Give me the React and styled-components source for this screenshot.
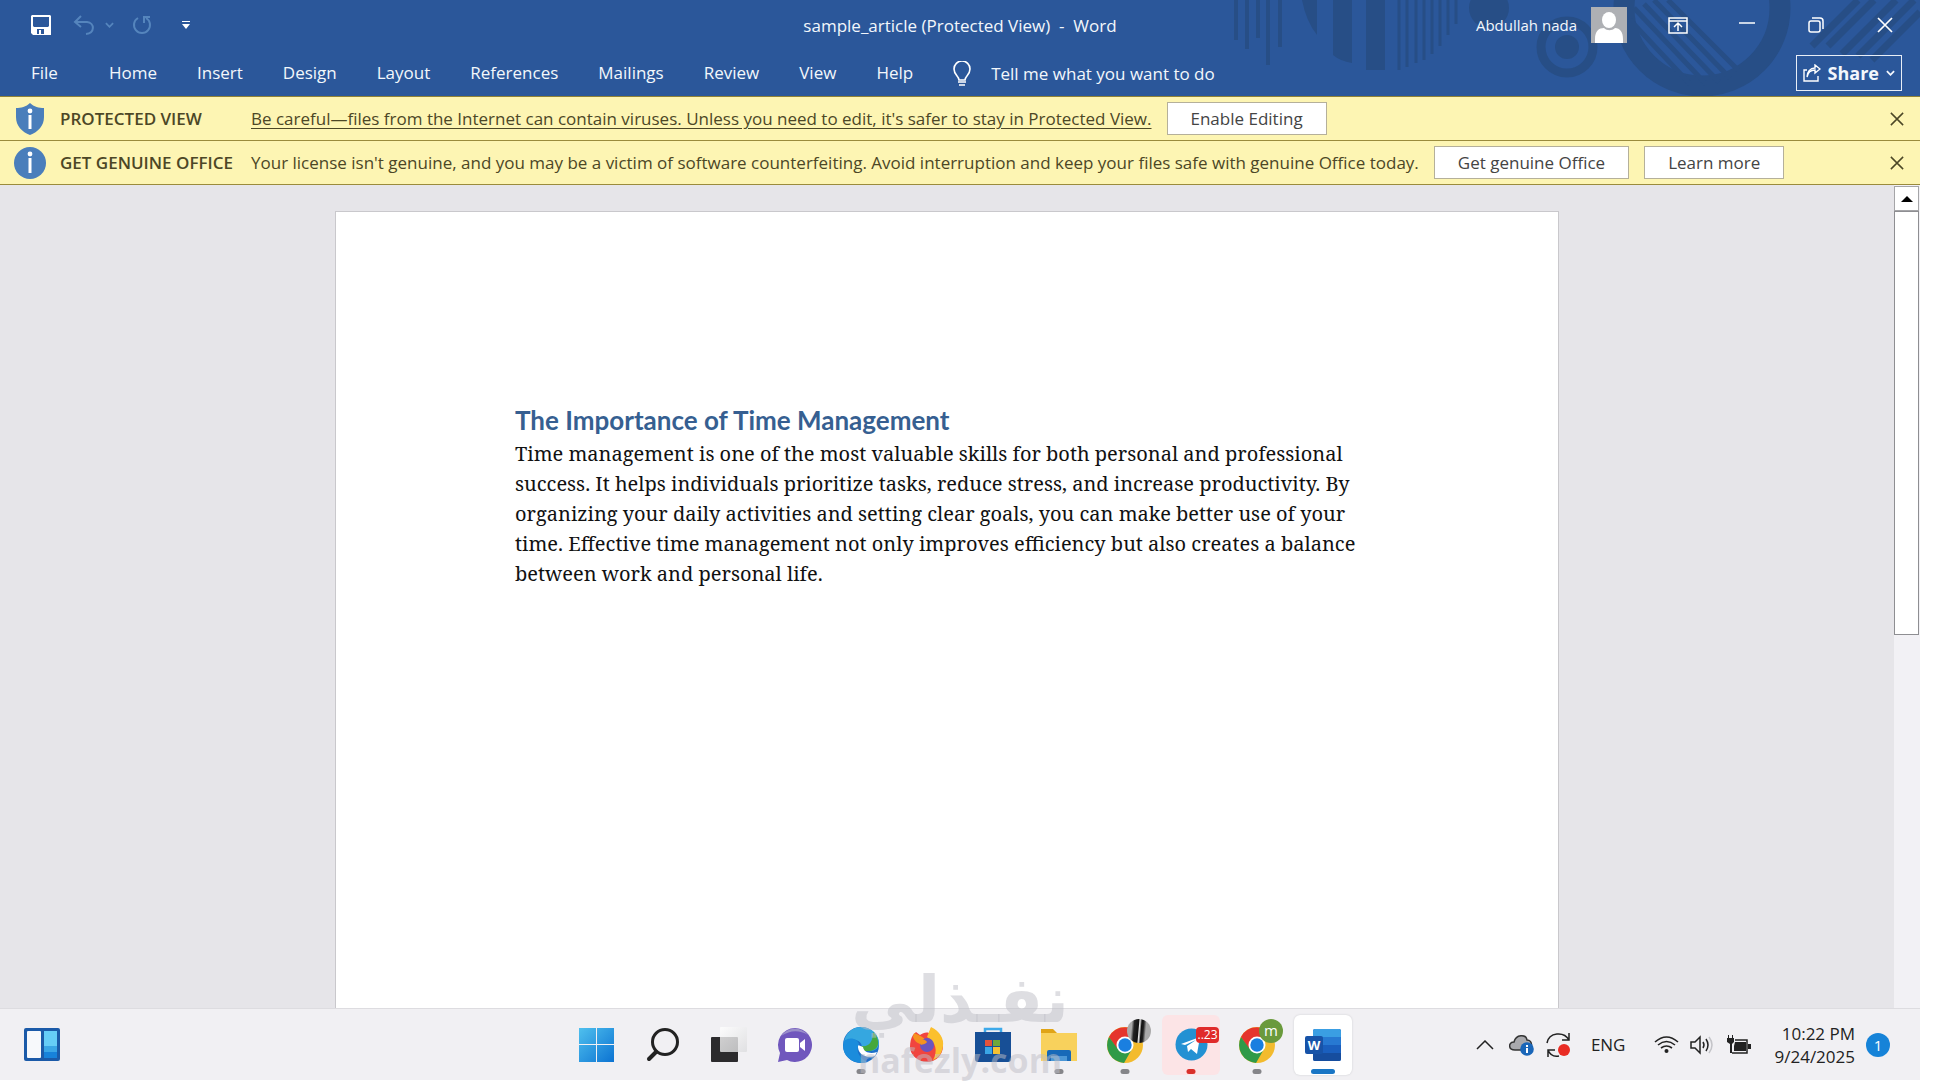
import React from 'react';
import styled, { createGlobalStyle } from 'styled-components';

const ui = '"Open Sans", "Noto Sans", sans-serif';

const GlobalStyle = createGlobalStyle`
  * {
    box-sizing: border-box;
  }
  body {
    margin: 0;
    background: #fff;
    font-family: ${ui};
    font-size: 17px;
  }
  button, input {
    font: inherit;
    color: inherit;
    background: none;
    border: 0;
    padding: 0;
    margin: 0;
  }
  svg {
    display: block;
  }
`;

const Desktop = styled.div`
  display: flex;
  flex-direction: column;
  height: 100vh;
  padding: 0 16px 12px 0;
`;

/* ---------- header ---------- */

const Header = styled.header`
  position: relative;
  overflow: hidden;
  flex: none;
  background: #2b579a;
  color: #f3f7fc;
`;

const HeaderArt = styled.svg`
  position: absolute;
  top: 0;
  right: 0;
`;

const TitleBar = styled.div`
  position: relative;
  display: grid;
  grid-template-columns: 1fr auto 1fr;
  align-items: center;
  height: 50px;
`;

const QuickAccess = styled.div`
  display: flex;
  align-items: center;
  padding-left: 31px;
`;

const ToolButton = styled.button`
  margin-right: ${(p) => p.$gap || 0}px;
  color: ${(p) => (p.$dim ? '#5585bd' : '#fff')};
`;

const DocTitle = styled.div`
  white-space: pre;
`;

const Account = styled.div`
  display: flex;
  align-items: center;
  justify-content: flex-end;
  padding-right: 25px;
`;

const UserName = styled.span`
  font-size: 15px;
  margin-right: 14px;
`;

const WindowButton = styled.button`
  display: flex;
  justify-content: center;
  width: 20px;
  margin-left: ${(p) => p.$gap || 49}px;
`;

const Ribbon = styled.nav`
  position: relative;
  display: flex;
  align-items: center;
  height: 46px;
  padding: 0 18px 0 11px;
`;

const Tab = styled.button`
  padding: 0 20px;
  margin-right: ${(p) => (p.$first ? 11 : 0)}px;
  line-height: 24px;
`;

const TellMe = styled.label`
  display: flex;
  align-items: center;
  flex: 1;
  gap: 20px;
  padding-left: 20px;
`;

const TellInput = styled.input`
  width: 260px;
  outline: 0;
  &::placeholder {
    color: #f3f7fc;
    opacity: 1;
  }
`;

const ShareButton = styled.button`
  display: flex;
  align-items: center;
  gap: 7px;
  height: 36px;
  padding: 0 6px;
  border: 1px solid #e8eef7;
  font-size: 18px;
  font-weight: 700;
`;

/* ---------- message bars ---------- */

const MessageBar = styled.section`
  display: flex;
  align-items: center;
  flex: none;
  height: 44px;
  padding: 0 16px 0 14px;
  border-bottom: 1px solid #9a8b3c;
  background: #fdf5b3;
  color: #4c4726;
  &:first-of-type {
    height: 45px;
    border-top: 1px solid #8f8237;
  }
`;

const BarTitle = styled.strong`
  width: 191px;
  margin-left: 14px;
  font-weight: 600;
  white-space: nowrap;
`;

const BarLink = styled.a`
  color: inherit;
  text-underline-offset: 3px;
`;

const BarText = styled.span`
  white-space: nowrap;
`;

const BarButton = styled.button`
  height: 33px;
  margin-left: 15px;
  padding: 0 23px;
  border: 1px solid #b5b09a;
  background: #fff;
  color: #444;
  white-space: nowrap;
`;

const BarClose = styled.button`
  margin-left: auto;
`;

/* ---------- document ---------- */

const Workspace = styled.main`
  display: flex;
  flex: 1;
  min-height: 0;
  background: #e6e5e9;
`;

const Canvas = styled.div`
  flex: 1;
  overflow: hidden;
  padding-top: 26px;
`;

const Page = styled.article`
  width: 1224px;
  max-width: 100%;
  height: 1584px;
  margin: 0 auto;
  padding: 192px 178px 0 179px;
  border: 1px solid #c9c8cc;
  background: #fff;
`;

const Heading = styled.h1`
  margin: 0;
  color: #365f91;
  font: 700 26px/32px Lato, "Open Sans", sans-serif;
`;

const Paragraph = styled.p`
  margin: 3px 0 0;
  color: #111;
  font: 20px/30px "Noto Serif", "Liberation Serif", serif;
`;

const ScrollBar = styled.div`
  display: flex;
  flex-direction: column;
  width: 26px;
  padding: 1px 1px 0 0;
  background: #f2f1f5;
`;

const ScrollUp = styled.button`
  display: flex;
  align-items: center;
  justify-content: center;
  height: 25px;
  border: 1px solid #a5a5a8;
  background: #fff;
`;

const ScrollThumb = styled.div`
  flex: 17;
  border: 1px solid #8e8e92;
  background: #fff;
`;

const ScrollTrack = styled.div`
  flex: 15;
`;

/* ---------- taskbar ---------- */

const TaskBar = styled.footer`
  position: relative;
  display: grid;
  grid-template-columns: 1fr auto 1fr;
  align-items: center;
  flex: none;
  height: 72px;
  padding: 0 24px;
  border-top: 1px solid #dddce0;
  background: #f1f0f3;
  color: #222;
`;

const Corner = styled.div`
  display: flex;
`;

const Apps = styled.div`
  display: flex;
`;

const AppButton = styled.button`
  position: relative;
  display: flex;
  align-items: center;
  justify-content: center;
  width: 58px;
  height: 60px;
  margin: 0 4px;
  border-radius: 6px;
  background: ${(p) => p.$tint || 'transparent'};
  box-shadow: ${(p) => (p.$active ? '0 0 2px #c8c8cc' : 'none')};
  &::after {
    content: '';
    position: absolute;
    bottom: 1px;
    left: 50%;
    width: ${(p) => (p.$active ? 24 : 9)}px;
    height: 5px;
    border-radius: 3px;
    transform: translateX(-50%);
    background: ${(p) => p.$mark || 'transparent'};
  }
`;

const Badge = styled.span`
  position: absolute;
  top: ${(p) => (p.$square ? 12 : 4)}px;
  right: ${(p) => (p.$square ? 1 : 3)}px;
  display: flex;
  align-items: center;
  justify-content: center;
  width: ${(p) => (p.$square ? 23 : 24)}px;
  height: ${(p) => (p.$square ? 16 : 24)}px;
  border-radius: ${(p) => (p.$square ? '4px' : '50%')};
  background: ${(p) => p.$fill};
  color: #fff;
  font-size: ${(p) => (p.$square ? 12 : 15)}px;
  line-height: 1;
`;

const Tray = styled.div`
  display: flex;
  align-items: center;
  justify-content: flex-end;
  padding-right: 6px;
`;

const TrayButton = styled.button`
  margin-right: ${(p) => p.$gap}px;
`;

const Clock = styled.time`
  margin-right: 11px;
  text-align: right;
  line-height: 23px;
`;

const Notice = styled.span`
  display: grid;
  place-items: center;
  width: 24px;
  height: 24px;
  border-radius: 50%;
  background: #1683d8;
  color: #fff;
  font-size: 15px;
`;

const Watermark = styled.div`
  position: absolute;
  bottom: 0;
  left: 50%;
  transform: translateX(-50%);
  pointer-events: none;
  text-align: center;
  color: rgba(190, 189, 197, 0.5);
  font-weight: 700;
`;

const WatermarkName = styled.div`
  font: 700 64px/80px "DejaVu Sans", sans-serif;
`;

const WatermarkSite = styled.div`
  font-size: 34px;
  line-height: 40px;
`;

/* ---------- drawings ---------- */

const Art = () => (
  <HeaderArt width="700" height="96" viewBox="1220 0 700 96" fill="none" stroke="#274e86" aria-hidden="true">
    <path strokeWidth="4" d="M1236 0v40M1247 0v49M1258 0v38M1268 0v65M1280 0v47" />
    <path fill="#274e86" stroke="none" d="M1302 0h15v35q-11-14-15-35zM1333 0h19v63q-12-2-19-8zM1366 0h19v70h-19z" />
    <path strokeWidth="3" d="M1399 0v70M1407 0v67M1416 0v63M1424 0v60M1432 0v54M1440 0v46M1448 0v35M1456 0v24" />
    <circle cx="1489" cy="8" r="20" fill="#274e86" stroke="none" />
    <circle cx="1567" cy="47" r="26" strokeWidth="9" />
    <circle cx="1567" cy="47" r="12" fill="#274e86" stroke="none" />
    <circle cx="1702" cy="8" r="78" strokeWidth="21" />
    <path strokeWidth="5" d="M1634 8l72 76M1644 4l75 78M1654 0l76 78M1668 0l70 70M1630 20l60 64" />
    <path strokeWidth="7" d="M1812 46l46-46M1828 46l46-46M1842 54l54-54M1858 56l56-56M1872 60l48-48" />
  </HeaderArt>
);

const SaveIcon = () => (
  <svg width="20" height="20" viewBox="0 0 20 20">
    <path fill="#fff" fillRule="evenodd" d="M1 0h18l1 1v19H2l-2-2V1zM2 2v9l1 1h14l1-1V2zM6 14v5h2v-4h2v4h3v-5z" />
  </svg>
);

const UndoIcon = () => (
  <svg width="22" height="20" viewBox="0 0 22 20" fill="none" stroke="currentColor" strokeWidth="2">
    <path d="M8 1L2 7l6 5M2 7h12c8 1 8 11-1 12" />
  </svg>
);

const RedoIcon = () => (
  <svg width="20" height="20" viewBox="0 0 20 20" fill="none" stroke="currentColor" strokeWidth="2">
    <path d="M6 3a8 8 0 1 0 8 0M18 2h-6v6" />
  </svg>
);

const Chevron = ({ size = 9, width = 2 }) => (
  <svg width={size} height="6" viewBox="0 0 10 6" fill="none" stroke="currentColor" strokeWidth={width}>
    <path d="M1 1l4 4 4-4" />
  </svg>
);

const CustomizeIcon = () => (
  <svg width="8" height="8" viewBox="0 0 8 8">
    <path fill="#fff" d="M0 0h8v1H0zM0 3h8L4 8z" />
  </svg>
);

const Avatar = () => (
  <svg width="36" height="36" viewBox="0 0 36 36">
    <path fill="#aeb0b4" d="M0 0h36v36H0z" />
    <path fill="#fff" d="M4 36v-4c0-8 4-11 9-11 3 3 8 3 11 0 5 0 8 4 8 11v4z" />
    <ellipse cx="18" cy="13" rx="7" ry="8" fill="#fff" />
  </svg>
);

const RibbonIcon = () => (
  <svg width="20" height="17" viewBox="0 0 20 17" fill="none" stroke="#fff" strokeWidth="1.5">
    <path d="M1 1h18v15H1zM1 4h18M10 14V7M6 10l4-4 4 4" />
  </svg>
);

const MinimizeIcon = () => (
  <svg width="16" height="16" viewBox="0 0 16 16" stroke="#fff" strokeWidth="1.5">
    <path d="M0 6h16" />
  </svg>
);

const RestoreIcon = () => (
  <svg width="16" height="16" viewBox="0 0 16 16" fill="none" stroke="#fff" strokeWidth="1.5">
    <rect x="1" y="4" width="11" height="11" rx="2" />
    <path d="M4 1h8q3 0 3 3v8" />
  </svg>
);

const CloseIcon = ({ size = 16, color = '#fff' }) => (
  <svg width={size} height={size} viewBox="0 0 16 16" stroke={color} strokeWidth="1.7">
    <path d="M1 1l14 14M15 1L1 15" />
  </svg>
);

const BulbIcon = () => (
  <svg width="18" height="25" viewBox="0 0 18 25" fill="none" stroke="#fff" strokeWidth="1.6">
    <path d="M6 19c0-4-5-5-5-11a8 8 0 0 1 16 0c0 6-5 7-5 11zM5 21h8M6 24h6" />
  </svg>
);

const ShareIcon = () => (
  <svg width="18" height="18" viewBox="0 0 18 18" fill="none" stroke="#fff" strokeWidth="1.4">
    <path d="M4 6H1v11h14v-5M4 13c1-5 4-7 8-7v3l5-4-5-4v3C7 4 4 8 4 13z" />
  </svg>
);

const ShieldIcon = () => (
  <svg width="32" height="32" viewBox="0 0 32 32">
    <path fill="#4a7ebb" d="M16 0c4 4 9 5 14 5v9c0 9-6 15-14 18C8 29 2 23 2 14V5c5 0 10-1 14-5z" />
    <circle cx="16" cy="8" r="2.4" fill="#fff" />
    <path fill="#fff" d="M14.500 12h3v14h-3z" />
  </svg>
);

const InfoIcon = () => (
  <svg width="32" height="32" viewBox="0 0 32 32">
    <circle cx="16" cy="16" r="16" fill="#4a7ebb" />
    <circle cx="16" cy="7" r="2.400" fill="#fff" />
    <path fill="#fff" d="M14.500 11h3v15h-3z" />
  </svg>
);

const WidgetsIcon = () => (
  <svg width="36" height="33" viewBox="0 0 36 33">
    <rect width="36" height="33" rx="2" fill="#1b5aa8" />
    <rect x="3" y="3" width="14" height="27" rx="1" fill="#f7f9fb" />
    <path fill="#66cdf7" d="M20 3h13v15H20z" />
    <path fill="#3aa6e6" d="M20 18h13v6H20z" />
    <path fill="#1782da" d="M20 24h13v6H20z" />
  </svg>
);

const StartIcon = () => (
  <svg width="36" height="36" viewBox="0 0 36 36">
    <defs>
      <linearGradient id="start" x2="1" y2="1">
        <stop stopColor="#4fc0ee" />
        <stop offset="1" stopColor="#0c73d2" />
      </linearGradient>
    </defs>
    <path fill="url(#start)" d="M0 1h17v16H0zM18 1h17v16H18zM0 18h17v17H0zM18 18h17v17H18z" />
  </svg>
);

const SearchIcon = () => (
  <svg width="34" height="34" viewBox="0 0 34 34" fill="none" stroke="#222" strokeLinecap="round">
    <circle cx="19" cy="14" r="12.500" strokeWidth="3" />
    <path strokeWidth="4" d="M10 24l-7 7" />
  </svg>
);

const TaskViewIcon = () => (
  <svg width="36" height="36" viewBox="0 0 36 36">
    <defs>
      <linearGradient id="pane" x2="1" y2="1">
        <stop stopColor="#fff" stopOpacity="0.8" />
        <stop offset="1" stopColor="#dcdcde" stopOpacity="0.8" />
      </linearGradient>
    </defs>
    <rect y="10" width="27" height="25" rx="1" fill="#2c2b2d" />
    <rect x="9" width="27" height="25" rx="1" fill="url(#pane)" />
  </svg>
);

const ChatIcon = () => (
  <svg width="36" height="36" viewBox="0 0 36 36">
    <path fill="#7057bd" d="M18 1a17 17 0 1 1-8 32l-9 2 2-9A17 17 0 0 1 18 1z" />
    <path fill="#9a8fc9" d="M4 9A17 17 0 0 1 31 8Q18 0 4 9z" />
    <rect x="8" y="11" width="14" height="14" rx="2" fill="#fff" />
    <path fill="#fff" d="M23 16l5-4v12l-5-4z" />
  </svg>
);

const EdgeIcon = () => (
  <svg width="36" height="36" viewBox="0 0 36 36">
    <circle cx="18" cy="18" r="18" fill="#1b6fc9" />
    <path fill="#35a7e0" d="M1 14C4 4 11 0 18 0c11 0 18 8 18 16 0 5-4 8-9 8H17c3-2 3-9-4-11-5-1-9 0-12 1z" />
    <path fill="#45a83d" d="M30 5c7 6 8 18-4 19h-5c-3-2-3-3-2-5 6 1 11-3 11-14z" />
    <path fill="#fff" d="M15 18c-1 9 8 14 17 11l2-4c-6 2-13 1-14-5z" />
    <path fill="#1b8cdc" d="M1 14c6-5 14-2 15 3-4 7 1 15 9 18C8 39-3 27 1 14z" />
  </svg>
);

const FirefoxIcon = () => (
  <svg width="34" height="36" viewBox="0 0 34 36">
    <path fill="#f1453f" d="M3 8l3-3 4 3c3-2 6-3 9-2l2-5c8 3 12 11 12 18 0 9-7 16-16 16S0 28 0 20c0-5 1-9 3-12z" />
    <path fill="#fbc02d" d="M21 0c9 4 13 12 12 19-1 8-5 12-10 14 5-9 3-18-6-23z" />
    <path fill="#f7931e" d="M4 6c5 2 9 4 13 8l-3 4c-6-1-9-3-11-8z" />
    <circle cx="17" cy="18" r="7" fill="#6a55bf" />
    <path fill="#f7931e" d="M8 13c5-2 8 0 9 2-2 3-5 2-6 3z" />
  </svg>
);

const StoreIcon = () => (
  <svg width="36" height="36" viewBox="0 0 36 36">
    <path fill="none" stroke="#3da9ea" strokeWidth="2.500" d="M10 8V2h16v6" />
    <path fill="#174f96" d="M0 5h36v27q0 3-3 3H3q-3 0-3-3z" />
    <path fill="#e2533a" d="M10 13h7v6h-7z" />
    <path fill="#6fa83a" d="M18 13h7v6h-7z" />
    <path fill="#3aa6e6" d="M10 20h7v7h-7z" />
    <path fill="#f5c132" d="M18 20h7v7h-7z" />
  </svg>
);

const FolderIcon = () => (
  <svg width="36" height="36" viewBox="0 0 36 36">
    <path fill="#e0a417" d="M0 2h12l4 4H0z" />
    <path fill="#f8d15c" d="M0 6h36v28H0z" />
    <path fill="#1769b8" d="M6 34v-9q0-2 2-2h20q2 0 2 2v9z" />
    <path fill="#4c97d6" d="M10 29h16v5H10z" />
  </svg>
);

const ChromeIcon = () => (
  <svg width="36" height="36" viewBox="0 0 36 36">
    <circle cx="18" cy="18" r="18" fill="#f3bb2e" />
    <path fill="#e5352d" d="M2 10A18 18 0 0 1 34 10H18L10 22z" />
    <path fill="#2f9a48" d="M2 10A18 18 0 0 0 17 36l8-14-15-1z" />
    <circle cx="18" cy="18" r="8.500" fill="#fff" />
    <circle cx="18" cy="18" r="6.700" fill="#1a7fe0" />
  </svg>
);

const TelegramIcon = () => (
  <svg width="33" height="33" viewBox="0 0 33 33">
    <circle cx="16.500" cy="16.500" r="16" fill="#2391d3" />
    <path fill="#fff" d="M6 16l19-7-3 17-6-5-3 3-1-6 9-6-11 5z" />
  </svg>
);

const WordIcon = () => (
  <svg width="36" height="34" viewBox="0 0 36 34">
    <rect x="8" y="1" width="28" height="32" rx="2" fill="#1a5fbe" />
    <path fill="#3a9ee3" d="M10 1h24q2 0 2 2v6H8V3q0-2 2-2z" />
    <path fill="#2779d2" d="M8 9h28v8H8z" />
    <path fill="#164d9e" d="M8 25h28v6q0 2-2 2H10q-2 0-2-2z" />
    <rect y="8" width="18" height="18" rx="2" fill="#1753a8" />
    <text x="9" y="22" textAnchor="middle" fill="#fff" fontSize="13" fontWeight="700">W</text>
  </svg>
);

const CloudIcon = () => (
  <svg width="25" height="22" viewBox="0 0 25 22">
    <path fill="#a9a9ad" stroke="#333" strokeWidth="1.500" d="M6 16C-1 16-1 8 5 8c2-8 12-8 13-2 6 0 6 10 0 10z" />
    <circle cx="18" cy="15" r="6.800" fill="#1a66b8" />
    <path fill="#fff" d="M17 11h2v2h-2zM17 14h2v5h-2z" />
  </svg>
);

const SyncIcon = () => (
  <svg width="25" height="26" viewBox="0 0 25 26" fill="none" stroke="#222" strokeWidth="1.500">
    <path d="M1 11C3 0 18-1 23 8M23 1v7h-7M2 25v-7h7M2 18c2 5 6 7 11 6" />
    <circle cx="18" cy="18" r="6" fill="#e92c24" stroke="none" />
  </svg>
);

const WifiIcon = () => (
  <svg width="25" height="18" viewBox="0 0 25 18" fill="none" stroke="#222" strokeWidth="1.600">
    <path d="M1 6q11.500-10 23 0M4 9q8.500-7 17 0M7 12q5.500-4 11 0" />
    <circle cx="12.500" cy="15" r="2" fill="#222" stroke="none" />
  </svg>
);

const SpeakerIcon = () => (
  <svg width="25" height="20" viewBox="0 0 25 20" fill="none" stroke="#222" strokeWidth="1.500">
    <path d="M1 7h4l5-5v16l-5-5H1zM13 7q2 3 0 6M16 4q4 6 0 12" />
    <path stroke="#c4c4c8" d="M19 2q6 8 0 16" />
  </svg>
);

const BatteryIcon = () => (
  <svg width="25" height="20" viewBox="0 0 25 20">
    <path fill="#222" d="M2 0h1v3h3V0h1v3h1v4l-2 2v9H4V9L1 7V3h1zM9 7h11v9H8v-5z" />
    <path fill="none" stroke="#222" strokeWidth="1.500" d="M9 5h12v13H6" />
    <path fill="#222" d="M22 9h3v5h-3z" />
  </svg>
);

const tabs = ['File', 'Home', 'Insert', 'Design', 'Layout', 'References', 'Mailings', 'Review', 'View', 'Help'];

const apps = [
  { name: 'Start', Icon: StartIcon },
  { name: 'Search', Icon: SearchIcon },
  { name: 'Task view', Icon: TaskViewIcon },
  { name: 'Chat', Icon: ChatIcon },
  { name: 'Edge', Icon: EdgeIcon, mark: '#858589' },
  { name: 'Firefox', Icon: FirefoxIcon },
  { name: 'Store', Icon: StoreIcon },
  { name: 'Explorer', Icon: FolderIcon, mark: '#858589' },
  {
    name: 'Chrome',
    Icon: ChromeIcon,
    mark: '#858589',
    badge: { fill: 'linear-gradient(95deg, #aaa 20%, #222 30%, #111 46%, #eee 50%, #999 54%, #111 58%, #222 66%, #aaa 76%)' },
  },
  { name: 'Telegram', Icon: TelegramIcon, mark: '#d9302a', tint: '#fce4e6', badge: { fill: '#e02a2a', text: '..23', square: true } },
  { name: 'Chrome, profile m', Icon: ChromeIcon, mark: '#858589', badge: { fill: '#6a9a3c', text: 'm' } },
  { name: 'Word', Icon: WordIcon, mark: '#1976c5', tint: '#fff', active: true },
];

const App = () => (
  <Desktop>
    <GlobalStyle />
    <Header>
      <Art />
      <TitleBar>
        <QuickAccess>
          <ToolButton $gap={22} aria-label="Save"><SaveIcon /></ToolButton>
          <ToolButton $gap={10} $dim aria-label="Undo"><UndoIcon /></ToolButton>
          <ToolButton $gap={18} $dim aria-label="Undo list"><Chevron /></ToolButton>
          <ToolButton $gap={30} $dim aria-label="Redo"><RedoIcon /></ToolButton>
          <ToolButton aria-label="Customize toolbar"><CustomizeIcon /></ToolButton>
        </QuickAccess>
        <DocTitle>{'sample_article (Protected View)  -  Word'}</DocTitle>
        <Account>
          <UserName>Abdullah nada</UserName>
          <Avatar />
          <WindowButton $gap={41} aria-label="Ribbon display options"><RibbonIcon /></WindowButton>
          <WindowButton aria-label="Minimize"><MinimizeIcon /></WindowButton>
          <WindowButton aria-label="Restore"><RestoreIcon /></WindowButton>
          <WindowButton aria-label="Close"><CloseIcon /></WindowButton>
        </Account>
      </TitleBar>
      <Ribbon>
        {tabs.map((tab, i) => (
          <Tab key={tab} $first={i === 0}>{tab}</Tab>
        ))}
        <TellMe>
          <BulbIcon />
          <TellInput placeholder="Tell me what you want to do" aria-label="Tell me what you want to do" />
        </TellMe>
        <ShareButton>
          <ShareIcon />
          Share
          <Chevron />
        </ShareButton>
      </Ribbon>
    </Header>

    <MessageBar>
      <ShieldIcon />
      <BarTitle>PROTECTED VIEW</BarTitle>
      <BarText>
        <BarLink href="#protected-view">
          Be careful—files from the Internet can contain viruses. Unless you need to edit, it's safer to stay in Protected View.
        </BarLink>
      </BarText>
      <BarButton>Enable Editing</BarButton>
      <BarClose aria-label="Close message"><CloseIcon size={14} color="#4c4726" /></BarClose>
    </MessageBar>
    <MessageBar>
      <InfoIcon />
      <BarTitle>GET GENUINE OFFICE</BarTitle>
      <BarText>
        Your license isn't genuine, and you may be a victim of software counterfeiting. Avoid interruption and keep your files safe with genuine Office today.
      </BarText>
      <BarButton>Get genuine Office</BarButton>
      <BarButton>Learn more</BarButton>
      <BarClose aria-label="Close message"><CloseIcon size={14} color="#4c4726" /></BarClose>
    </MessageBar>

    <Workspace>
      <Canvas>
        <Page>
          <Heading>The Importance of Time Management</Heading>
          <Paragraph>
            Time management is one of the most valuable skills for both personal and professional success. It helps
            individuals prioritize tasks, reduce stress, and increase productivity. By organizing your daily activities
            and setting clear goals, you can make better use of your time. Effective time management not only improves
            efficiency but also creates a balance between work and personal life.
          </Paragraph>
        </Page>
      </Canvas>
      <ScrollBar>
        <ScrollUp aria-label="Scroll up">
          <svg width="12" height="6" viewBox="0 0 12 6"><path d="M0 6l6-6 6 6z" /></svg>
        </ScrollUp>
        <ScrollThumb />
        <ScrollTrack />
      </ScrollBar>
    </Workspace>

    <TaskBar>
      <Corner>
        <button aria-label="Widgets"><WidgetsIcon /></button>
      </Corner>
      <Apps>
        {apps.map(({ name, Icon, mark, tint, active, badge }) => (
          <AppButton key={name} aria-label={name} $mark={mark} $tint={tint} $active={active}>
            <Icon />
            {badge && <Badge $fill={badge.fill} $square={badge.square}>{badge.text}</Badge>}
          </AppButton>
        ))}
      </Apps>
      <Tray>
        <TrayButton $gap={15} aria-label="Hidden icons">
          <svg width="18" height="10" viewBox="0 0 18 10" fill="none" stroke="#222" strokeWidth="1.500"><path d="M1 9l8-8 8 8" /></svg>
        </TrayButton>
        <TrayButton $gap={12} aria-label="OneDrive"><CloudIcon /></TrayButton>
        <TrayButton $gap={20} aria-label="Updates"><SyncIcon /></TrayButton>
        <TrayButton $gap={29}>ENG</TrayButton>
        <TrayButton $gap={11} aria-label="Wi-Fi"><WifiIcon /></TrayButton>
        <TrayButton $gap={11} aria-label="Volume"><SpeakerIcon /></TrayButton>
        <TrayButton $gap={23} aria-label="Battery"><BatteryIcon /></TrayButton>
        <Clock>
          10:22 PM
          <br />
          9/24/2025
        </Clock>
        <Notice>1</Notice>
      </Tray>
      <Watermark aria-hidden="true">
        <WatermarkName lang="ar" dir="rtl">نفـذلي</WatermarkName>
        <WatermarkSite>nafezly.com</WatermarkSite>
      </Watermark>
    </TaskBar>
  </Desktop>
);

export default App;
